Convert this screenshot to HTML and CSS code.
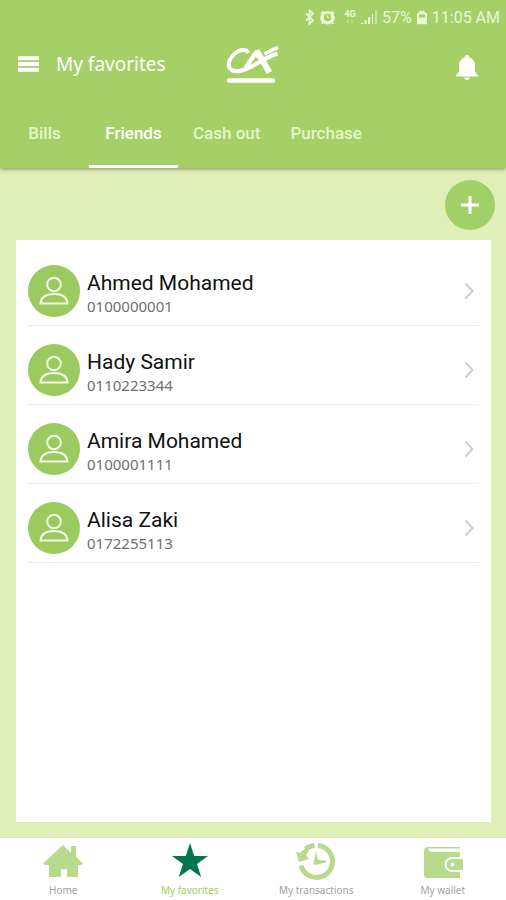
FILE: index.html
```html
<!DOCTYPE html>
<html lang="en">
<head>
<meta charset="utf-8">
<meta name="viewport" content="width=device-width, initial-scale=1">
<title>My favorites</title>
<link rel="stylesheet" href="styles.css">
</head>
<body>
<svg class="defs" aria-hidden="true">
  <symbol id="person" viewBox="0 0 30 30">
    <circle cx="15" cy="8.500" r="6.800"/>
    <path d="M1.500 27.500C2 21.500 7 18 15 18s13 3.500 13.500 9.500z"/>
  </symbol>
  <symbol id="chevron" viewBox="0 0 10 18"><path d="M1.500 1.500L8.500 9l-7 7.500"/></symbol>
</svg>

<header class="header">
  <div class="status">
    <svg class="status-bluetooth" viewBox="0 0 12 18"><path d="M2 5l8 8-4 4V1l4 4-8 8"/></svg>
    <svg class="status-alarm" viewBox="0 0 16 16"><path class="fill" fill-rule="evenodd" d="M1 2.500L3.500 1l1.500.8a7 7 0 0 1 6 0L12.500 1 15 2.500v3a7 7 0 0 1-1 7.500l1 2h-2l-1-1a7 7 0 0 1-8 0l-1 1H1l1-2a7 7 0 0 1-1-7.500zM8 4a4 4 0 1 0 0 8 4 4 0 0 0 0-8z"/><path d="M8 5.500V8h2"/></svg>
    <span class="network">4G<svg viewBox="0 0 12 5"><path d="M4 0v4L2 2M8 5V1l2 2"/></svg></span>
    <svg class="status-signal" viewBox="0 0 16 16"><path d="M1 15v-1M4.500 15v-4M8 15V8"/><path d="M11.500 15V5M15 15V1" class="thin"/></svg>
    <span>57%</span>
    <svg class="status-battery" viewBox="0 0 12 16"><path class="fill" fill-rule="evenodd" d="M3 0h6v2h1.500L12 3.500V16H0V3.500L1.500 2H3zM2.500 4.500V8h7V4.500z"/></svg>
    <span>11:05 AM</span>
  </div>
  <div class="bar">
    <div class="heading">
      <button class="icon-button" aria-label="Menu">
        <svg class="menu-icon" viewBox="0 0 22 16"><path d="M0 2h22M0 8h22M0 14h22"/></svg>
      </button>
      <h1 class="title">My favorites</h1>
    </div>
    <svg class="logo" viewBox="0 0 54 38" role="img" aria-label="CA">
      <path d="M22.500 7C20.500 3 14 3 9 7.500 3 12.500 1 19.500 4.500 23c4 4 13 2 22-3C36 14.500 40 11.500 51.500 7.500" stroke-width="4"/>
      <path d="M19.500 22L30 6.500h1l1.500 5" stroke-width="4.500"/>
      <path d="M30.500 4.500L43.500 26.500" stroke-width="6"/>
      <path d="M38.500 8C43 5.500 46 3.500 52 1.500" stroke-width="3.500"/>
      <path d="M3 34.500h44" stroke-width="4.500" stroke-linecap="round"/>
    </svg>
    <button class="icon-button bell" aria-label="Notifications">
      <svg class="bell-icon" viewBox="0 0 24 26"><path d="M12 0c1.500 0 2.300 1 2.300 2.500C18 3.500 20 6.500 20 10.500V16c0 2 3 3 3 5.500H1C1 19 4 18 4 16v-5.500C4 6.500 6 3.500 9.700 2.500 9.700 1 10.500 0 12 0zM9.500 22.500h5c0 3.500-5 3.500-5 0z"/></svg>
    </button>
  </div>
  <nav class="tabs" aria-label="Favorite types">
    <a class="tab" href="#bills">Bills</a>
    <a class="tab active" href="#friends" aria-current="page">Friends</a>
    <a class="tab" href="#cash-out">Cash out</a>
    <a class="tab" href="#purchase">Purchase</a>
  </nav>
</header>

<main class="content">
  <button class="add" aria-label="Add favorite">
    <svg viewBox="0 0 18 18"><path d="M9 0v18M0 9h18"/></svg>
  </button>
  <ul class="card">
    <li><a class="row" href="#ahmed">
      <span class="avatar"><svg><use href="#person"/></svg></span>
      <span class="who"><span class="name">Ahmed Mohamed</span><span class="phone">0100000001</span></span>
      <svg class="chevron"><use href="#chevron"/></svg>
    </a></li>
    <li><a class="row" href="#hady">
      <span class="avatar"><svg><use href="#person"/></svg></span>
      <span class="who"><span class="name">Hady Samir</span><span class="phone">0110223344</span></span>
      <svg class="chevron"><use href="#chevron"/></svg>
    </a></li>
    <li><a class="row" href="#amira">
      <span class="avatar"><svg><use href="#person"/></svg></span>
      <span class="who"><span class="name">Amira Mohamed</span><span class="phone">0100001111</span></span>
      <svg class="chevron"><use href="#chevron"/></svg>
    </a></li>
    <li><a class="row" href="#alisa">
      <span class="avatar"><svg><use href="#person"/></svg></span>
      <span class="who"><span class="name">Alisa Zaki</span><span class="phone">0172255113</span></span>
      <svg class="chevron"><use href="#chevron"/></svg>
    </a></li>
  </ul>
</main>

<nav class="bottom" aria-label="Main">
  <a class="item" href="#home">
    <svg viewBox="0 0 40 38"><path d="M20 3l8 8V4h5v11l7 6.500-2 1.500h-3v12H24v-7.500h-6V35H6V23H2l-2-1.500z"/></svg>
    <span>Home</span>
  </a>
  <a class="item current" href="#favorites" aria-current="page">
    <svg viewBox="0 0 40 38"><path d="M20 1l4.200 13H38L27 22l4.200 13L20 27 8.800 35 13 22 2 14h13.800z"/></svg>
    <span>My favorites</span>
  </a>
  <a class="item" href="#transactions">
    <svg viewBox="0 0 40 38"><path class="ring" d="M22 3.500a16 16 0 1 1-17 20M9.500 7a16 16 0 0 1 9-3.500"/><path d="M0 9.500l4 1.500 6-5 3 3-3 4 3 4-10 3zM20 9l2 9 8 .5v2l-11 2.500-1.500-1z"/></svg>
    <span>My transactions</span>
  </a>
  <a class="item" href="#wallet">
    <svg viewBox="0 0 40 38"><path fill-rule="evenodd" d="M5 5h32v1.500H5.500v2L8 10h29v5h-8a7 7 0 0 0 0 15h8v6H4.500Q1 36 1 32.500V9Q1 5 5 5z"/><path fill-rule="evenodd" d="M29 17h11v11H29a5.500 5.500 0 0 1 0-11zm.5 3.500a2 2 0 1 0 0 4 2 2 0 0 0 0-4z"/></svg>
    <span>My wallet</span>
  </a>
</nav>
</body>
</html>
```

FILE: styles.css
```css
* {
  box-sizing: border-box;
}

body {
  margin: 0;
  min-height: 100vh;
  display: flex;
  flex-direction: column;
  background: #e0eeb8;
  font-family: Roboto, "Liberation Sans", sans-serif;
  color: #111;
}

a {
  color: inherit;
  text-decoration: none;
}

button {
  padding: 0;
  border: 0;
  background: none;
  color: inherit;
}

svg {
  display: block;
  flex: none;
}

.defs {
  position: absolute;
  width: 0;
  height: 0;
}

.header {
  position: relative;
  background: #a4d067;
  color: #fff;
  box-shadow: 0 1px 4px rgba(60, 80, 30, 0.6);
}

.status {
  display: flex;
  align-items: center;
  justify-content: flex-end;
  gap: 5px;
  height: 34px;
  padding-right: 6px;
  font-size: 16px;
  color: #e8f7d4;
}

.status svg {
  fill: none;
  stroke: currentColor;
  stroke-width: 2;
}

.status .fill {
  fill: currentColor;
  stroke: none;
}

.status .thin {
  stroke-width: 1;
}

.status .status-bluetooth {
  width: 11px;
  height: 16px;
}

.status .status-alarm {
  width: 15px;
  height: 15px;
  margin-right: 4px;
  stroke-width: 1;
}

.network {
  display: flex;
  flex-direction: column;
  align-items: center;
  font-size: 9px;
  font-weight: 700;
  line-height: 9px;
}

.network svg {
  width: 12px;
  height: 5px;
  stroke-width: 1;
  opacity: 0.5;
}

.status-signal {
  width: 16px;
  height: 16px;
}

.status-battery {
  width: 10px;
  height: 15px;
}

.bar {
  display: grid;
  grid-template-columns: 1fr auto 1fr;
  align-items: center;
  height: 60px;
  padding: 0 18px;
}

.heading {
  display: flex;
  align-items: center;
  gap: 17px;
}

.menu-icon {
  width: 21px;
  height: 16px;
  stroke: #fff;
  stroke-width: 4;
}

.title {
  margin: 0;
  font: 400 19px/28px "Noto Sans", sans-serif;
}

.logo {
  width: 54px;
  height: 38px;
  margin-top: 2px;
  fill: none;
  stroke: #fff;
}

.bell {
  justify-self: end;
  margin: 8px 9px 0 0;
}

.bell-icon {
  width: 24px;
  height: 26px;
  fill: #fff;
}

.tabs {
  display: flex;
  height: 74px;
}

.tab {
  display: flex;
  align-items: center;
  justify-content: center;
  min-width: 89px;
  padding: 6px 15px 0;
  border-bottom: 3px solid transparent;
  font-size: 17px;
  font-weight: 500;
  color: #e3f5cb;
}

.tab.active {
  color: #fff;
  border-bottom-color: #fff;
}

.content {
  flex: 1;
  display: flex;
  flex-direction: column;
  padding: 12px 15px 16px 16px;
}

.add {
  display: grid;
  place-items: center;
  align-self: flex-end;
  width: 50px;
  height: 50px;
  margin-right: -4px;
  border-radius: 50%;
  background: #a1cf68;
}

.add svg {
  width: 18px;
  height: 18px;
  stroke: #fff;
  stroke-width: 3;
}

.card {
  flex: 1;
  margin: 10px 0 0;
  padding: 7px 12px;
  list-style: none;
  background: #fff;
}

.row {
  display: flex;
  align-items: center;
  gap: 7px;
  padding: 18px 5px 8px 0;
  border-bottom: 1px solid #ebebeb;
}

.avatar {
  display: grid;
  place-items: center;
  width: 52px;
  height: 52px;
  border-radius: 50%;
  background: #9bcb5f;
}

.avatar svg {
  width: 30px;
  height: 30px;
  fill: none;
  stroke: #f3fae8;
  stroke-width: 2;
}

.who {
  flex: 1;
  display: flex;
  flex-direction: column;
  padding-top: 3px;
}

.name {
  font-size: 21px;
  line-height: 26px;
}

.phone {
  font: 400 15px/20px "Noto Sans", sans-serif;
  color: #707070;
}

.chevron {
  width: 10px;
  height: 18px;
  fill: none;
  stroke: #cfcfcf;
  stroke-width: 2;
}

.bottom {
  display: grid;
  grid-template-columns: repeat(4, 1fr);
  height: 62px;
  background: #fff;
}

.item {
  display: flex;
  flex-direction: column;
  align-items: center;
  padding-top: 4px;
  font: 400 10px/14px "Noto Sans", sans-serif;
  color: #a2a2a2;
}

.item svg {
  width: 40px;
  height: 38px;
  margin-bottom: 3px;
  fill: #b7db8d;
}

.item .ring {
  fill: none;
  stroke: #b7db8d;
  stroke-width: 5;
}

.item.current {
  color: #a4cd62;
}

.item.current svg {
  fill: #00774c;
}
```
